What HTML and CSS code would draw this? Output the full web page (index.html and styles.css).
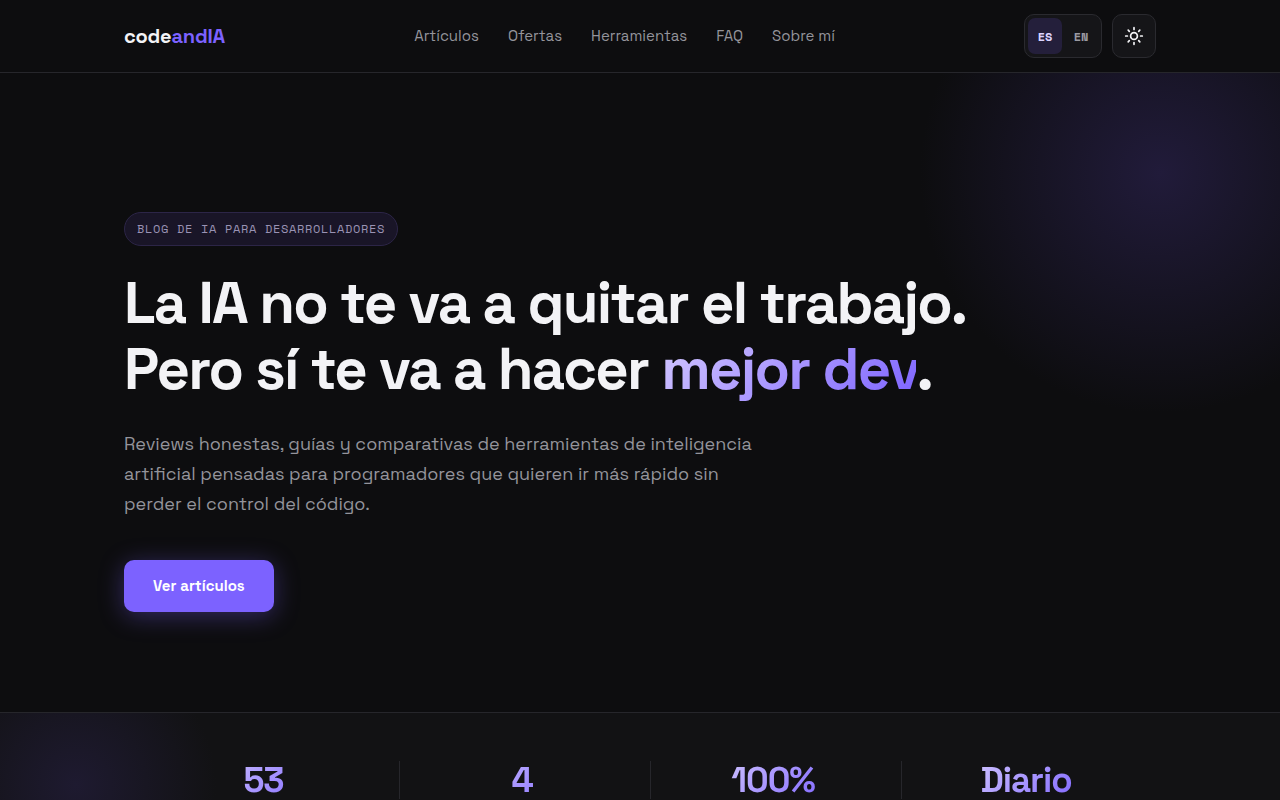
FILE: index.html
```html
<!DOCTYPE html>
<html lang="es">
<head>
    <meta charset="UTF-8">
    <meta name="viewport" content="width=device-width, initial-scale=1.0">
    <title>codeandIA</title>
    <link rel="stylesheet" href="styles.css">
</head>
<body>
    <header class="header">
        <div class="container header-inner">
            <a class="logo" href="#">code<span>andIA</span></a>
            <nav class="nav">
                <a href="#">Artículos</a>
                <a href="#">Ofertas</a>
                <a href="#">Herramientas</a>
                <a href="#">FAQ</a>
                <a href="#">Sobre mí</a>
            </nav>
            <div class="controls">
                <div class="lang-switch">
                    <button class="lang active" type="button">ES</button>
                    <button class="lang" type="button">EN</button>
                </div>
                <button class="theme-toggle" type="button">
                    <svg width="20" height="20" viewBox="0 0 20 20" fill="none" stroke="currentColor" stroke-width="1.7" stroke-linecap="round">
                        <circle cx="10" cy="10" r="3.4"/>
                        <path d="M10 1.7v1.7M10 16.6v1.7M1.7 10h1.7M16.6 10h1.7M4.2 4.2l1.1 1.1M14.7 14.7l1.1 1.1M4.2 15.8l1.1-1.1M14.7 5.3l1.1-1.1"/>
                    </svg>
                </button>
            </div>
        </div>
    </header>

    <section class="hero">
        <div class="container">
            <span class="badge">BLOG DE IA PARA DESARROLLADORES</span>
            <h1>La IA no te va a quitar el trabajo.<br>Pero sí te va a hacer <span class="gradient">mejor dev</span>.</h1>
            <p>Reviews honestas, guías y comparativas de herramientas de inteligencia artificial pensadas para programadores que quieren ir más rápido sin perder el control del código.</p>
            <a class="btn" href="#">Ver artículos</a>
        </div>
    </section>

    <section class="stats">
        <div class="container stats-grid">
            <div class="stat"><span class="gradient">53</span></div>
            <div class="stat"><span class="gradient">4</span></div>
            <div class="stat"><span class="gradient">100%</span></div>
            <div class="stat"><span class="gradient">Diario</span></div>
        </div>
    </section>
</body>
</html>
```

FILE: styles.css
```css
* {
    box-sizing: border-box;
    margin: 0;
    padding: 0;
}

body {
    font-family: "Space Grotesk", Inter, sans-serif;
    background: #0d0d0f;
    color: #f3f3f6;
}

a {
    color: inherit;
    text-decoration: none;
}

button {
    border: none;
    cursor: pointer;
}

.container {
    max-width: 1080px;
    margin: 0 auto;
    padding: 0 24px;
}

/* Header */
.header {
    border-bottom: 1px solid #26262b;
}

.header-inner {
    display: flex;
    align-items: center;
    justify-content: space-between;
    height: 72px;
}

.logo {
    font-size: 20px;
    font-weight: 700;
    letter-spacing: -0.01em;
}

.logo span {
    color: #7c62ff;
}

.nav {
    display: flex;
    gap: 29px;
    font-size: 15px;
    line-height: 18px;
    color: #94949b;
}

.controls {
    display: flex;
    gap: 10px;
}

.lang-switch,
.theme-toggle {
    height: 44px;
    background: #151518;
    border: 1px solid #2a2a2f;
    border-radius: 10px;
}

.lang-switch {
    display: flex;
    gap: 2px;
    padding: 3px;
}

.lang {
    width: 34px;
    border-radius: 7px;
    background: transparent;
    color: #9a9aa2;
    font-family: "Space Mono", "Liberation Mono", monospace;
    font-size: 12px;
    font-weight: 700;
}

.lang.active {
    background: #241f3b;
    color: #dcd4ff;
}

.theme-toggle {
    display: flex;
    align-items: center;
    justify-content: center;
    width: 44px;
    color: #f3f3f6;
}

/* Hero */
.hero {
    padding: 139px 0 100px;
    background: radial-gradient(circle 240px at calc(100% - 120px) 100px, #211b3a, #0d0d0f);
}

.badge {
    display: block;
    width: fit-content;
    padding: 0 12px;
    border: 1px solid #2c2547;
    border-radius: 17px;
    background: #191527;
    color: #9a93b4;
    font-family: "Space Mono", "Liberation Mono", monospace;
    font-size: 12px;
    line-height: 32px;
    letter-spacing: 0.055em;
}

.hero h1 {
    margin: 24px 0 27px;
    font-size: 58px;
    font-weight: 700;
    line-height: 66px;
    letter-spacing: -0.03em;
}

.gradient {
    background: linear-gradient(135deg, #d4c9ff, #7c62ff);
    -webkit-background-clip: text;
    background-clip: text;
    color: transparent;
}

.hero p {
    max-width: 640px;
    margin-bottom: 41px;
    font-size: 18px;
    line-height: 30px;
    color: #94949b;
}

.btn {
    display: block;
    width: fit-content;
    padding: 0 29px;
    border-radius: 10px;
    background: #7c62ff;
    color: #fff;
    font-size: 15px;
    font-weight: 600;
    line-height: 52px;
    box-shadow: 0 4px 24px rgba(124, 98, 255, 0.35);
}

/* Stats */
.stats {
    padding: 48px 0;
    border-top: 1px solid #26262b;
    background: radial-gradient(circle 140px at 76px 72px, #1e1a30, #121214);
}

.stats-grid {
    display: grid;
    grid-template-columns: 275fr 251fr 251fr 255fr;
}

.stat {
    padding-right: 6px;
    text-align: center;
    font-size: 35px;
    font-weight: 700;
    line-height: 38px;
    letter-spacing: -0.03em;
}

.stat:first-child {
    padding: 0 0 0 4px;
}

.stat + .stat {
    border-left: 1px solid #26262b;
}

.stat .gradient {
    display: inline-block;
    min-width: 120px;
}
```
